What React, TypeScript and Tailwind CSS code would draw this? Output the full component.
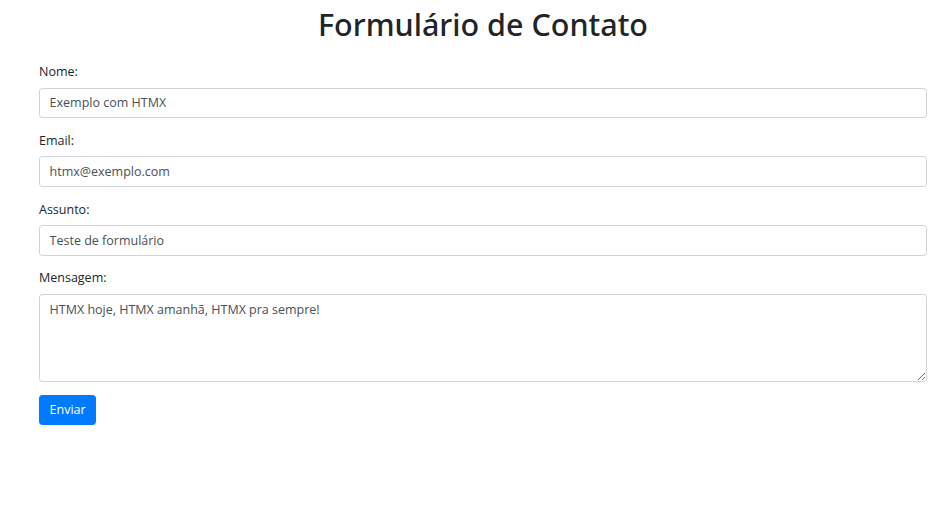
import React from "react";

const font = { fontFamily: '"Open Sans", "Noto Sans", "Liberation Sans", sans-serif' };
const titleFont = { fontFamily: '"Noto Sans", "Open Sans", sans-serif' };

function Field({ label, value, area }: { label: string; value: string; area?: boolean }) {
  return (
    <div className="mb-[12.8px]">
      <label className="block mb-[6.4px] text-[12.5px] leading-[19.2px] text-[#212529]">{label}</label>
      {area ? (
        <textarea
          rows={4}
          defaultValue={value}
          className="block w-full h-[88px] px-[9.6px] py-[4.8px] text-[12.5px] leading-[19.2px] text-[#495057] bg-white border border-[#ced4da] rounded-[3.2px] outline-none"
        />
      ) : (
        <input
          type="text"
          defaultValue={value}
          className="block w-full h-[30.4px] px-[9.6px] py-[4.8px] text-[12.5px] leading-[19.2px] text-[#495057] bg-white border border-[#ced4da] rounded-[3.2px] outline-none"
        />
      )}
    </div>
  );
}

export default function App() {
  return (
    <div style={font} className="bg-white min-h-[507px] pl-[39px] pr-[9px] pt-[5px] text-[#212529]">
      <h1 style={titleFont} className="text-center text-[30.5px] leading-[38.4px] font-medium mb-[18.6px]">Formulário de Contato</h1>
      <form>
        <Field label="Nome:" value="Exemplo com HTMX" />
        <Field label="Email:" value="htmx@exemplo.com" />
        <Field label="Assunto:" value="Teste de formulário" />
        <Field label="Mensagem:" value="HTMX hoje, HTMX amanhã, HTMX pra sempre!" area />
        <button
          type="button"
          className="h-[30.4px] px-[9.6px] text-[12.5px] leading-[19.2px] text-white bg-[#007bff] border border-[#007bff] rounded-[3.2px]"
        >
          Enviar
        </button>
      </form>
    </div>
  );
}
